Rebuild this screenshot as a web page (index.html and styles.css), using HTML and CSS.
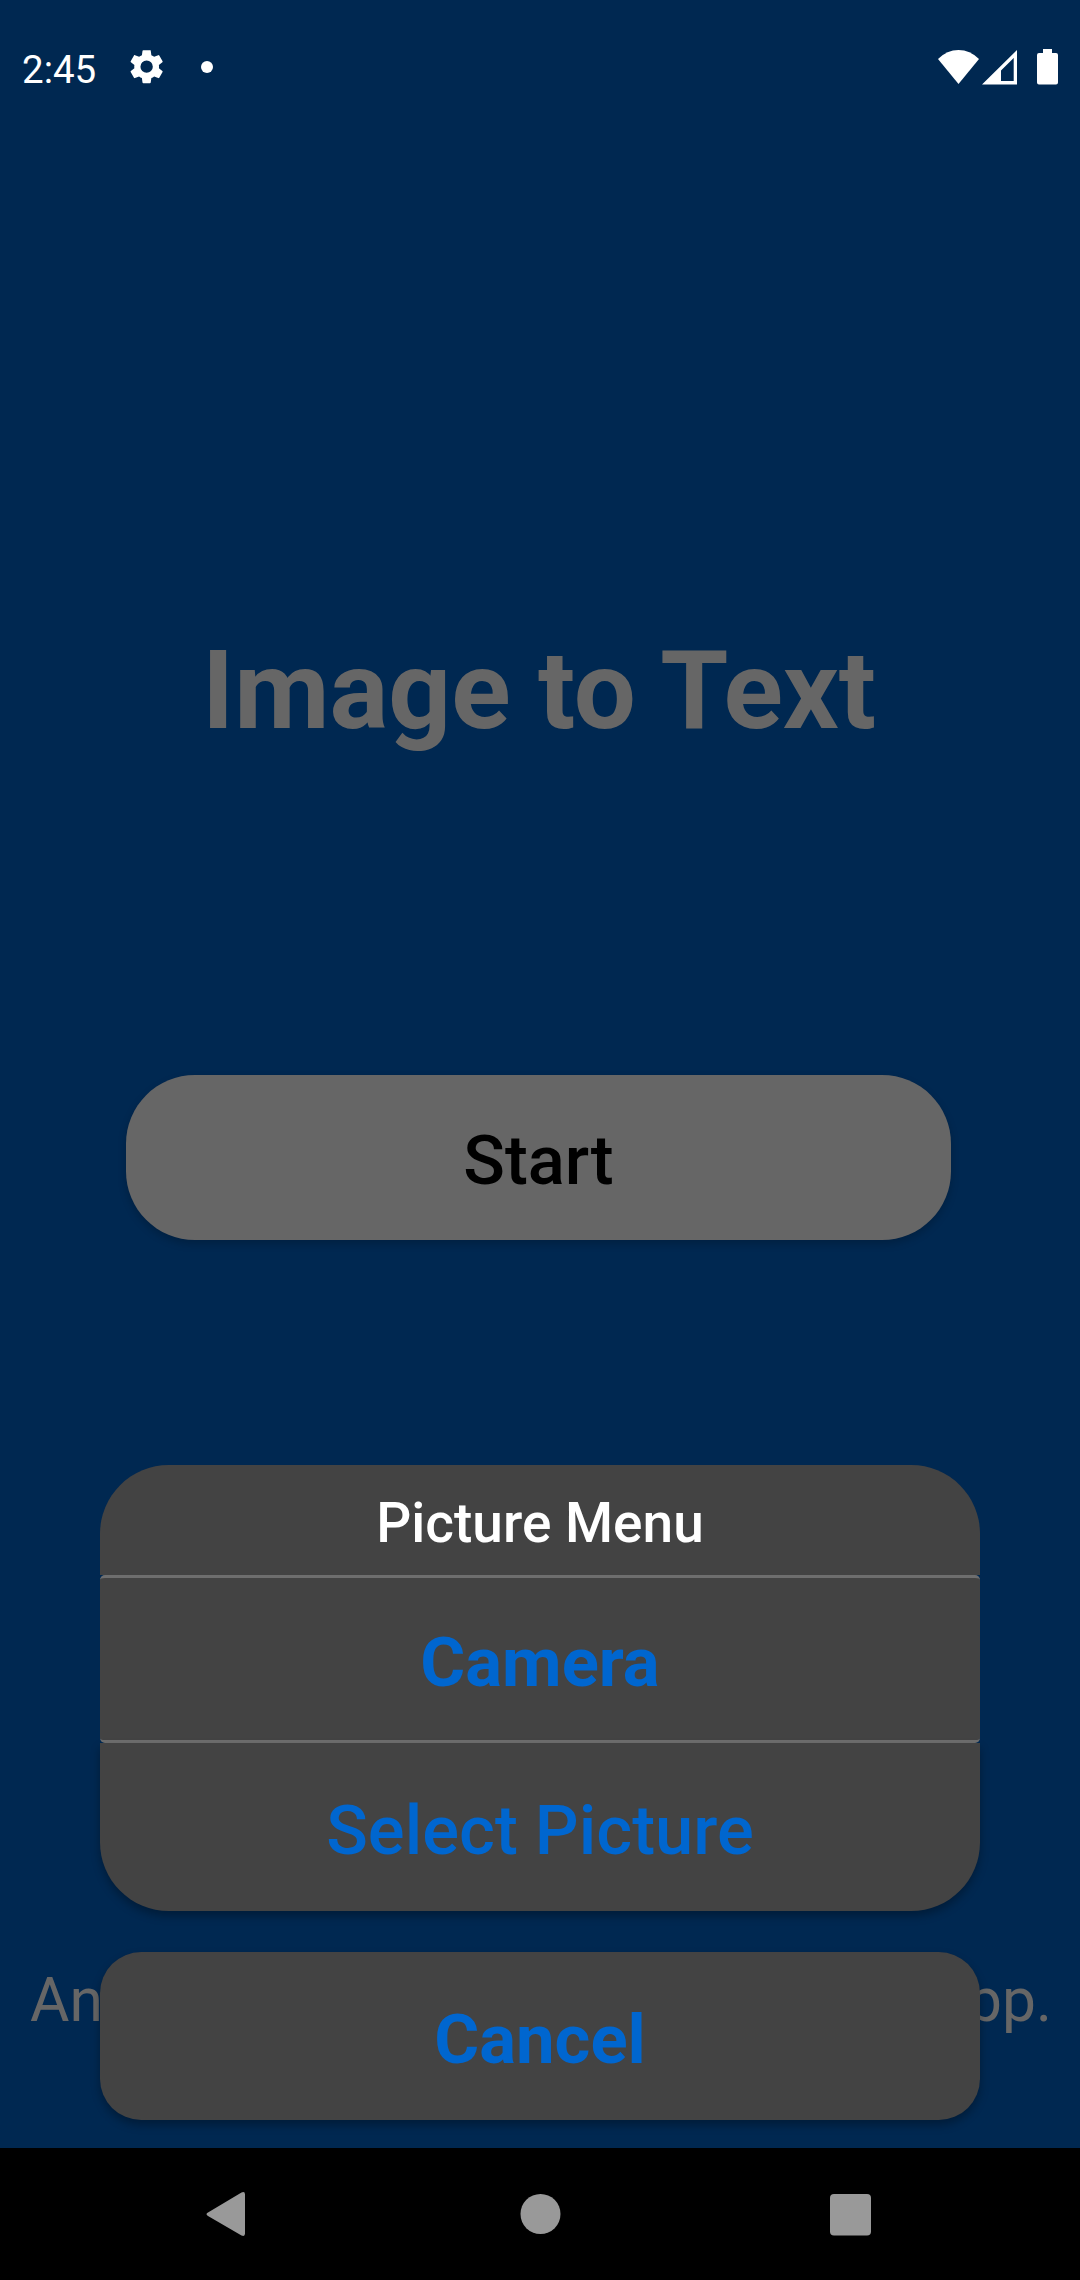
FILE: index.html
```html
<!DOCTYPE html>
<html lang="en">
<head>
<meta charset="utf-8">
<title>Image to Text</title>
<link rel="stylesheet" href="styles.css">
</head>
<body>
<div class="screen">
  <header class="status">
    <span class="time">2:45</span>
    <svg class="gear" viewBox="0 0 24 24"><path d="M19.14 12.94c.04-.3.06-.61.06-.94 0-.32-.02-.64-.07-.94l2.03-1.58a.49.49 0 0 0 .12-.61l-1.92-3.32a.488.488 0 0 0-.59-.22l-2.39.96c-.5-.38-1.03-.7-1.62-.94l-.36-2.54a.484.484 0 0 0-.48-.41h-3.84c-.24 0-.43.17-.47.41l-.36 2.54c-.59.24-1.13.57-1.62.94l-2.39-.96c-.22-.08-.47 0-.59.22L2.74 8.87c-.12.21-.08.47.12.61l2.03 1.58c-.05.3-.09.63-.09.94s.02.64.07.94l-2.03 1.58a.49.49 0 0 0-.12.61l1.92 3.32c.12.22.37.29.59.22l2.39-.96c.5.38 1.03.7 1.62.94l.36 2.54c.05.24.24.41.48.41h3.84c.24 0 .44-.17.47-.41l.36-2.54c.59-.24 1.13-.56 1.62-.94l2.39.96c.22.08.47 0 .59-.22l1.92-3.32c.12-.22.07-.47-.12-.61l-2.01-1.58zM12 15.6A3.6 3.6 0 1 1 12 8.400a3.600 3.600 0 0 1 0 7.200z"/></svg>
    <span class="dot"></span>
    <svg class="signals" viewBox="0 0 122 36">
      <path d="M0 10Q9 1 20.500 1T41 10L20.500 35z"/>
      <path fill-rule="evenodd" d="M44 35.500L79 1V35.500zM63 21.500V32H75.700V9z"/>
      <path d="M105 0h9v4h4a2 2 0 0 1 2 2v27.500a2 2 0 0 1-2 2h-17a2 2 0 0 1-2-2V6a2 2 0 0 1 2-2h4z"/>
    </svg>
  </header>
  <main class="content">
    <h1 class="title">Image to Text</h1>
    <button class="start">Start</button>
    <p class="tagline"><span>An</span><span>app.</span></p>
  </main>
  <section class="sheet">
    <h2 class="row heading">Picture Menu</h2>
    <button class="row camera">Camera</button>
    <button class="row select">Select Picture</button>
    <button class="row cancel">Cancel</button>
  </section>
  <nav class="nav">
    <svg viewBox="0 0 48 48"><path d="M6 22.500L39.500 2.500Q43 1 43 4.500V43.500Q43 47 39.500 45.500L6 26Q3 24.200 6 22.500z"/></svg>
    <svg viewBox="0 0 48 48"><circle cx="25.500" cy="24" r="20"/></svg>
    <svg viewBox="0 0 48 48"><rect x="3" y="4" width="41" height="41.500" rx="4"/></svg>
  </nav>
</div>
</body>
</html>
```
FILE: styles.css
```css
* { box-sizing: border-box; margin: 0; }
body { background: #002851; font-family: Roboto, sans-serif; }
button { border: 0; font-family: inherit; }
.screen {
  position: relative;
  display: flex;
  flex-direction: column;
  width: 1080px;
  height: 2280px;
  overflow: hidden;
  background: #002851;
}
.status {
  display: flex;
  align-items: center;
  height: 134px;
  padding: 0 20px 0 22px;
  color: #fff;
  fill: #fff;
}
.time { width: 77px; padding-top: 6px; font-size: 38.5px; line-height: 46px; }
.gear { width: 41.25px; height: 41.25px; margin-left: 27px; }
.dot { width: 12px; height: 12px; margin-left: 34px; border-radius: 50%; background: #fff; }
.signals { width: 122px; height: 36px; margin-left: auto; }
.content { display: flex; flex: 1; flex-direction: column; align-items: center; }
.title {
  margin: 491px 2px 0 0;
  color: #666;
  font-size: 110px;
  font-weight: 700;
  line-height: 132px;
}
.start {
  width: 825px;
  height: 165px;
  margin: 318px 3px 0 0;
  padding: 5px 0 0;
  border-radius: 68.75px;
  background: #666;
  color: #000;
  font-size: 68.75px;
  font-weight: 500;
  box-shadow: 0 4px 9px rgba(0, 0, 0, .2);
}
.tagline {
  display: flex;
  justify-content: space-between;
  width: 100%;
  margin-top: 725px;
  padding: 0 28px 0 30px;
  color: #666;
  font-size: 60.5px;
  line-height: 72px;
}
.sheet {
  position: absolute;
  top: 1465px;
  left: 100px;
  display: flex;
  flex-direction: column;
  width: 880px;
}
.row {
  height: 168px;
  padding: 7px 0 0;
  background: #434343;
  color: #0066cf;
  font-size: 68.75px;
  text-align: center;
}
.heading {
  height: 110px;
  padding-top: 6px;
  border-radius: 68.75px 68.75px 0 0;
  color: #fff;
  font-size: 55px;
  font-weight: 500;
  line-height: 104px;
}
.camera {
  border: solid #6e6e6e;
  border-width: 3px 0;
  border-radius: 5px;
  font-weight: 700;
}
.select {
  border-radius: 0 0 68.75px 68.75px;
  font-weight: 500;
  box-shadow: 0 5px 10px rgba(0, 0, 0, .3);
}
.cancel {
  margin-top: 41px;
  border-radius: 41.25px;
  font-weight: 700;
  box-shadow: 0 5px 10px rgba(0, 0, 0, .3);
}
.nav {
  display: flex;
  align-items: center;
  justify-content: space-between;
  height: 132px;
  padding: 0 205px 0 202px;
  background: #000;
  fill: #999;
}
.nav svg { width: 48px; height: 48px; }
```
